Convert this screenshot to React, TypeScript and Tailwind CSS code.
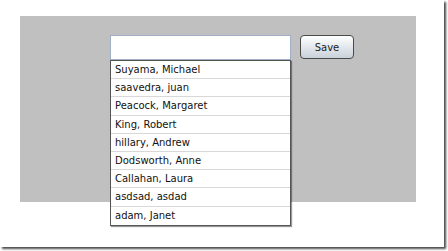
import React from 'react';

const names = [
  'Suyama, Michael',
  'saavedra, juan',
  'Peacock, Margaret',
  'King, Robert',
  'hillary, Andrew',
  'Dodsworth, Anne',
  'Callahan, Laura',
  'asdsad, asdad',
  'adam, Janet',
];

const App = () => {
  return (
    <div className="w-[448px] h-[251px] bg-white" style={{ fontFamily: '"DejaVu Sans", Verdana, sans-serif' }}>
      <div className="w-[444px] h-[247px] bg-white shadow-[2px_2px_2px_rgba(0,0,0,0.7)] pt-4 pl-5">
        <div className="relative w-[396px] h-[186px] bg-[#c0c0c0]">
          <div className="absolute left-[90px] top-[19px] flex flex-col">
            <input
              type="text"
              className="w-[181px] h-[25px] bg-white border border-[#9fb0c6] outline-none"
            />
            <ul className="w-[181px] bg-white border border-[#555] shadow-[1px_1px_1px_rgba(0,0,0,0.4)] text-[10px] text-[#111]">
              {names.map((name, i) => (
                <li
                  key={name}
                  className={`h-[18.2px] leading-[18px] pl-1 ${i < names.length - 1 ? 'border-b border-[#d8d8d8]' : ''}`}
                >
                  {name}
                </li>
              ))}
            </ul>
          </div>
          <button className="absolute left-[280px] top-[19px] w-[54px] h-[24px] rounded-[4px] border border-[#4a4a4a] bg-gradient-to-b from-white to-[#c9d1da] text-[10px] text-[#222]">
            Save
          </button>
        </div>
      </div>
    </div>
  );
};

export default App;
